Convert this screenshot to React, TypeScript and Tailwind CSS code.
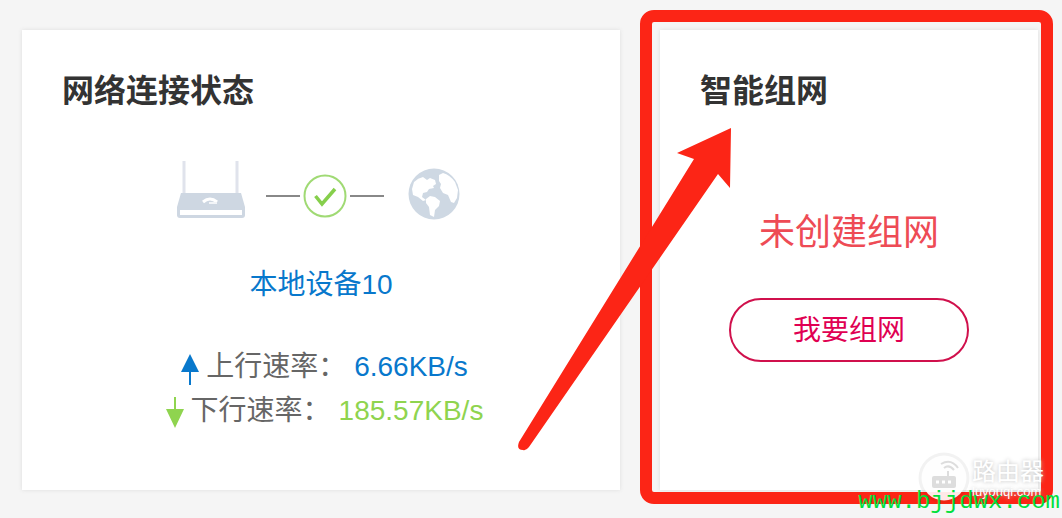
import React from 'react';

interface RateRowProps {
  label: string;
  value: string;
  direction: 'up' | 'down';
}

const RouterIcon: React.FC = () => (
  <svg className="h-[60px] w-[68px]" viewBox="0 0 68 60" fill="none" aria-hidden="true">
    <path d="M7 1v34M60 1v34" stroke="#e0e3ec" strokeWidth="3" />
    <path d="M4 33h60l4 14v8q0 3-3 3H3q-3 0-3-3v-8z" fill="#ced7e2" />
    <path d="M3 50h62v5H3z" fill="#fff" />
    <path d="M26 42q7-6 14 0" stroke="#fff" strokeWidth="3" />
    <path d="M32 43h8" stroke="#f3f5f8" strokeWidth="2" />
  </svg>
);

const CheckIcon: React.FC = () => (
  <svg className="h-11 w-11" viewBox="0 0 44 44" fill="none" aria-hidden="true">
    <circle cx="22" cy="22" r="20.5" stroke="#a0da74" strokeWidth="2" />
    <path d="M12.5 22l6.5 8 13-15" stroke="#86cf4c" strokeWidth="3.5" />
  </svg>
);

const GlobeIcon: React.FC = () => (
  <svg className="h-[52px] w-[52px]" viewBox="0 0 52 52" aria-hidden="true">
    <circle cx="26" cy="26" r="25.5" fill="#ced8e3" />
    <path
      d="M6 14q4-4 9-5l4 3 3-2 5 2 1 4-3 2 1 2-5 1-2 3-4 1-1 4 4 3-3 1-5-4-5-2-1-6zM18 31l4-3 5 1 5 4-1 5-4 4-1 7-4-2-1-8-3-4zM31 7l4-2q7 2 12 9l3 8-1 8-3 5-3-1-3-7-5-2-3-5 1-4-2-3z"
      fill="#fff"
    />
  </svg>
);

const RateRow: React.FC<RateRowProps> = ({ label, value, direction }) => (
  <div className={`flex h-11 items-center justify-center ${direction === 'up' ? 'text-[#0878cc]' : 'text-[#8fd44f]'}`}>
    <svg className="h-11 w-8" viewBox="0 0 32 44" aria-hidden="true">
      {direction === 'up' ? (
        <path d="M16 9l9 18h-8v13h-2V27H7z" fill="currentColor" />
      ) : (
        <path d="M15 8h2v12h8l-9 19-9-19h8z" fill="currentColor" />
      )}
    </svg>
    <span className="text-[#666]">{label}</span>
    <span className="ml-2">{value}</span>
  </div>
);

const Highlight: React.FC = () => (
  <>
    <div className="absolute -top-5 -right-[15px] -bottom-[14px] -left-5 rounded-[14px] border-[12px] border-[#fc2516]" />
    <svg className="absolute top-[97px] -left-[143px] h-[326px] w-[216px]" viewBox="0 0 216 326" aria-hidden="true">
      <path d="M214 1L160 26l17 6L2 315q-3 8 4 8 3 1 6-3L201 47l12 14z" fill="#fc2516" />
    </svg>
  </>
);

const Watermark: React.FC = () => (
  <div className="absolute right-[2px] bottom-[2px] h-16 w-[202px]">
    <div className="absolute top-0 right-4 flex items-center gap-[2px] text-white">
      <svg className="h-13 w-13" viewBox="0 0 52 52" fill="none" aria-hidden="true">
        <circle cx="26" cy="26" r="25.5" fill="#000" opacity="0.05" />
        <circle cx="26" cy="26" r="22.5" fill="#fff" opacity="0.9" />
        <rect x="14" y="24" width="24" height="12" rx="2" fill="#ddd" />
        <path d="M18 30h3M24 30h3M30 30h3" stroke="#fff" strokeWidth="3" />
        <path d="M30 24v-5M26 16q5-4 10 2M23 12q10-6 17 4" stroke="#ddd" strokeWidth="2" />
      </svg>
      <div className="[text-shadow:0_0_4px_#bbb]">
        <div className="text-[24px] leading-7">路由器</div>
        <div className="text-[13px] leading-3">luyouqi.com</div>
      </div>
    </div>
    <div className="absolute right-0 bottom-0 font-['Liberation_Mono',monospace] text-[24px] leading-7 text-[#00e03c]">
      www.bjjdwx.com
    </div>
  </div>
);

const App: React.FC = () => {
  return (
    <div className="relative min-h-screen bg-[#f5f5f5] pt-[30px] pr-6 pb-7 pl-[22px] font-['Liberation_Sans','Noto_Sans_CJK_SC',sans-serif] text-[28px]">
      <main className="grid grid-cols-[598fr_378fr] gap-10">
        <section className="min-h-[460px] bg-white px-10 pt-[41px] shadow-[0_0_4px_#ddd]">
          <h2 className="text-[32px] leading-10 font-bold text-[#333]">网络连接状态</h2>
          <div className="mt-[49px] flex items-end justify-center pr-[6px]">
            <RouterIcon />
            <div className="mr-6 mb-[2px] ml-[21px] flex items-center gap-[3px]">
              <div className="h-[2px] w-[34px] bg-[#888]" />
              <CheckIcon />
              <div className="h-[2px] w-[34px] bg-[#888]" />
            </div>
            <GlobeIcon />
          </div>
          <a href="#devices" className="mt-[45px] block text-center leading-10 text-[#0878cc]">
            本地设备10
          </a>
          <div className="mt-10">
            <RateRow label="上行速率：" value="6.66KB/s" direction="up" />
            <RateRow label="下行速率：" value="185.57KB/s" direction="down" />
          </div>
        </section>

        <section className="relative min-h-[460px] bg-white px-10 pt-[41px] shadow-[0_0_4px_#ddd]">
          <h2 className="text-[32px] leading-10 font-bold text-[#333]">智能组网</h2>
          <p className="mt-[100px] text-center text-[36px] leading-11 text-[#ee4b55]">未创建组网</p>
          <button className="mx-auto mt-[43px] block h-16 w-60 rounded-full border-2 border-[#d0104c] pt-[2px] text-[#e00052]">
            我要组网
          </button>
          <Highlight />
        </section>
      </main>
      <Watermark />
    </div>
  );
};

export default App;
